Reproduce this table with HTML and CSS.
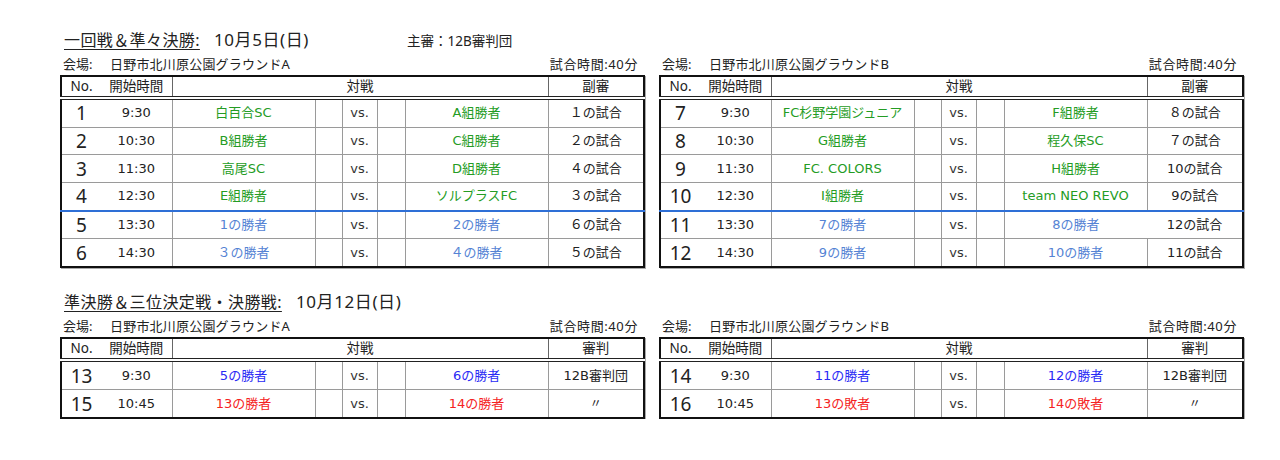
FILE: index.html
```html
<!DOCTYPE html>
<html lang="ja">
<head>
<meta charset="utf-8">
<link rel="stylesheet" href="styles.css">
</head>
<body>
<div class="page">
  <section class="block">
    <div class="title-row">
      <span class="title">一回戦＆準々決勝:</span>
      <span class="date">10月5日(日)</span>
      <span class="chief">主審：12B審判団</span>
    </div>
    <div class="pair">
      <div class="venue-col">
        <div class="venue"><span class="vlabel">会場:</span><span class="vname">日野市北川原公園グラウンドA</span><span class="dur">試合時間:40分</span></div>
        <table class="sched">
          <colgroup><col class="c-no"><col class="c-time"><col class="c-team"><col class="c-gap"><col class="c-vs"><col class="c-gap2"><col class="c-team"><col class="c-ref"></colgroup>
          <thead><tr><th class="no">No.</th><th class="time">開始時間</th><th colspan="5">対戦</th><th>副審</th></tr></thead>
          <tbody>
            <tr><td class="no">1</td><td class="time">9:30</td><td class="g">白百合SC</td><td></td><td class="vs">vs.</td><td></td><td class="g">A組勝者</td><td>１の試合</td></tr>
            <tr><td class="no">2</td><td class="time">10:30</td><td class="g">B組勝者</td><td></td><td class="vs">vs.</td><td></td><td class="g">C組勝者</td><td>２の試合</td></tr>
            <tr><td class="no">3</td><td class="time">11:30</td><td class="g">高尾SC</td><td></td><td class="vs">vs.</td><td></td><td class="g">D組勝者</td><td>４の試合</td></tr>
            <tr><td class="no">4</td><td class="time">12:30</td><td class="g">E組勝者</td><td></td><td class="vs">vs.</td><td></td><td class="g">ソルプラスFC</td><td>３の試合</td></tr>
            <tr class="sep"><td class="no">5</td><td class="time">13:30</td><td class="lb">1の勝者</td><td></td><td class="vs">vs.</td><td></td><td class="lb">2の勝者</td><td>６の試合</td></tr>
            <tr><td class="no">6</td><td class="time">14:30</td><td class="lb">３の勝者</td><td></td><td class="vs">vs.</td><td></td><td class="lb">４の勝者</td><td>５の試合</td></tr>
          </tbody>
        </table>
      </div>
      <div class="venue-col">
        <div class="venue"><span class="vlabel">会場:</span><span class="vname">日野市北川原公園グラウンドB</span><span class="dur">試合時間:40分</span></div>
        <table class="sched">
          <colgroup><col class="c-no"><col class="c-time"><col class="c-team"><col class="c-gap"><col class="c-vs"><col class="c-gap2"><col class="c-team"><col class="c-ref"></colgroup>
          <thead><tr><th class="no">No.</th><th class="time">開始時間</th><th colspan="5">対戦</th><th>副審</th></tr></thead>
          <tbody>
            <tr><td class="no">7</td><td class="time">9:30</td><td class="g">FC杉野学園ジュニア</td><td></td><td class="vs">vs.</td><td></td><td class="g">F組勝者</td><td>８の試合</td></tr>
            <tr><td class="no">8</td><td class="time">10:30</td><td class="g">G組勝者</td><td></td><td class="vs">vs.</td><td></td><td class="g">程久保SC</td><td>７の試合</td></tr>
            <tr><td class="no">9</td><td class="time">11:30</td><td class="g">FC. COLORS</td><td></td><td class="vs">vs.</td><td></td><td class="g">H組勝者</td><td>10の試合</td></tr>
            <tr><td class="no">10</td><td class="time">12:30</td><td class="g">I組勝者</td><td></td><td class="vs">vs.</td><td></td><td class="g">team NEO REVO</td><td>9の試合</td></tr>
            <tr class="sep"><td class="no">11</td><td class="time">13:30</td><td class="lb">7の勝者</td><td></td><td class="vs">vs.</td><td></td><td class="lb">8の勝者</td><td class="noline">12の試合</td></tr>
            <tr><td class="no">12</td><td class="time">14:30</td><td class="lb">9の勝者</td><td></td><td class="vs">vs.</td><td></td><td class="lb">10の勝者</td><td>11の試合</td></tr>
          </tbody>
        </table>
      </div>
    </div>
  </section>

  <section class="block block2">
    <div class="title-row">
      <span class="title">準決勝＆三位決定戦・決勝戦:</span>
      <span class="date">10月12日(日)</span>
    </div>
    <div class="pair">
      <div class="venue-col">
        <div class="venue"><span class="vlabel">会場:</span><span class="vname">日野市北川原公園グラウンドA</span><span class="dur">試合時間:40分</span></div>
        <table class="sched final">
          <colgroup><col class="c-no"><col class="c-time"><col class="c-team"><col class="c-gap"><col class="c-vs"><col class="c-gap2"><col class="c-team"><col class="c-ref"></colgroup>
          <thead><tr><th class="no">No.</th><th class="time">開始時間</th><th colspan="5">対戦</th><th>審判</th></tr></thead>
          <tbody>
            <tr><td class="no">13</td><td class="time">9:30</td><td class="b">5の勝者</td><td></td><td class="vs">vs.</td><td></td><td class="b">6の勝者</td><td>12B審判団</td></tr>
            <tr><td class="no">15</td><td class="time">10:45</td><td class="r">13の勝者</td><td></td><td class="vs">vs.</td><td></td><td class="r">14の勝者</td><td class="ditto">〃</td></tr>
          </tbody>
        </table>
      </div>
      <div class="venue-col">
        <div class="venue"><span class="vlabel">会場:</span><span class="vname">日野市北川原公園グラウンドB</span><span class="dur">試合時間:40分</span></div>
        <table class="sched final">
          <colgroup><col class="c-no"><col class="c-time"><col class="c-team"><col class="c-gap"><col class="c-vs"><col class="c-gap2"><col class="c-team"><col class="c-ref"></colgroup>
          <thead><tr><th class="no">No.</th><th class="time">開始時間</th><th colspan="5">対戦</th><th>審判</th></tr></thead>
          <tbody>
            <tr><td class="no">14</td><td class="time">9:30</td><td class="b">11の勝者</td><td></td><td class="vs">vs.</td><td></td><td class="b">12の勝者</td><td>12B審判団</td></tr>
            <tr><td class="no">16</td><td class="time">10:45</td><td class="r">13の敗者</td><td></td><td class="vs">vs.</td><td></td><td class="r">14の敗者</td><td class="ditto">〃</td></tr>
          </tbody>
        </table>
      </div>
    </div>
  </section>
</div>
</body>
</html>
```

FILE: styles.css
```css
html, body {
  margin: 0;
  padding: 0;
  background: #fff;
}
body {
  font-family: "Noto Sans", "Noto Sans CJK JP", sans-serif;
  color: #222;
}
.page {
  padding: 30px 0 0 60px;
}
.block2 {
  margin-top: 24px;
}
.title-row {
  display: flex;
  align-items: baseline;
  height: 20px;
  line-height: 20px;
  padding-left: 4px;
}
.title {
  font-size: 16px;
  letter-spacing: 0.4px;
  text-decoration: underline;
  text-underline-offset: 3px;
  text-decoration-thickness: 1px;
}
.date {
  font-size: 17px;
  letter-spacing: 0.6px;
  margin-left: 14px;
}
.chief {
  font-size: 13.5px;
  margin-left: 98px;
}
.pair {
  display: flex;
  gap: 16px;
  margin-top: 4px;
}
.venue-col {
  width: 583px;
}
.venue {
  display: flex;
  align-items: center;
  height: 18px;
  font-size: 13px;
  padding: 0 5px 0 3px;
  margin-bottom: 3px;
}
.vlabel {
  width: 47px;
}
.vname {
  letter-spacing: 0.2px;
}
.dur {
  margin-left: auto;
  letter-spacing: 0.6px;
}
.sched {
  width: 583px;
  table-layout: fixed;
  border-collapse: collapse;
  border: 2px solid #111;
  box-shadow: 1px 1px 0 #aaa;
  font-size: 13px;
}
.c-no { width: 40px; }
.c-time { width: 71px; }
.c-team { width: 143px; }
.c-gap { width: 27px; }
.c-vs { width: 35px; }
.c-gap2 { width: 28px; }
.c-ref { width: 96px; }
.sched th {
  height: 19px;
  padding: 0;
  font-weight: normal;
  font-size: 13.5px;
  line-height: 17px;
  border: 1px solid #666;
  border-bottom: 4px double #222;
  text-align: center;
  color: #222;
}
.sched td {
  height: 26.7px;
  padding: 0;
  border: 1px solid #9a9a9a;
  text-align: center;
  white-space: nowrap;
  font-family: "DejaVu Sans", "Noto Sans CJK JP", sans-serif;
  font-size: 13px;
  line-height: 16px;
}
.sched.final td {
  height: 27px;
}
.sched .time {
  border-left: hidden;
}
.sched td.no {
  font-family: "Noto Sans", sans-serif;
  font-size: 19px;
  line-height: 20px;
  color: #222;
}
.sched tr.sep td {
  border-top: 2px solid #2e6fd6;
}
.sched td.noline {
  border-left: hidden;
}
.vs { color: #333; }
.g { color: #249c24; }
.lb { color: #5583d4; }
.b { color: #2a2af5; }
.r { color: #f52222; }
.sched td.ditto { font-size: 12px; }
```
